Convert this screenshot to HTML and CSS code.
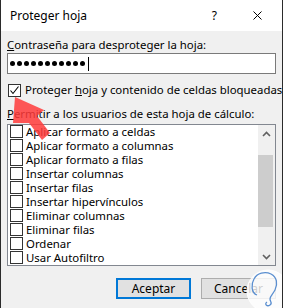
FILE: index.html
```html
<!DOCTYPE html>
<html lang="es">

<head>
    <title>Proteger hoja</title>
    <link rel="stylesheet" href="styles.css">
</head>

<body>
<div class="dialog">
    <div class="titlebar">
        <span class="title">Proteger hoja</span>
        <span class="help">?</span>
        <svg class="close" width="9" height="9" viewBox="0 0 9 9">
            <path d="M0.5 0.5 L8.5 8.5 M8.5 0.5 L0.5 8.5" stroke="#000" stroke-width="1" fill="none"/>
        </svg>
    </div>

    <div class="content">
        <div class="label"><u>C</u>ontraseña para desproteger la hoja:</div>
        <div class="password">
            <span class="dot"></span><span class="dot"></span><span class="dot"></span><span class="dot"></span>
            <span class="dot"></span><span class="dot"></span><span class="dot"></span><span class="dot"></span>
            <span class="dot"></span><span class="dot"></span><span class="dot"></span>
            <span class="caret"></span>
        </div>

        <div class="check-row">
            <span class="box">
                <svg width="11" height="11" viewBox="0 0 11 11">
                    <path d="M1.5 5.5 L4 8.5 L9.5 1.5" stroke="#000" stroke-width="1.1" fill="none"/>
                </svg>
            </span>
            <span>Proteger <u>h</u>oja y contenido de celdas bloqueadas</span>
        </div>

        <div class="label permit"><u>P</u>ermitir a los usuarios de esta hoja de cálculo:</div>

        <div class="listbox">
            <div class="items">
                <div class="item"><span class="box"></span>Aplicar formato a celdas</div>
                <div class="item"><span class="box"></span>Aplicar formato a columnas</div>
                <div class="item"><span class="box"></span>Aplicar formato a filas</div>
                <div class="item"><span class="box"></span>Insertar columnas</div>
                <div class="item"><span class="box"></span>Insertar filas</div>
                <div class="item"><span class="box"></span>Insertar hipervínculos</div>
                <div class="item"><span class="box"></span>Eliminar columnas</div>
                <div class="item"><span class="box"></span>Eliminar filas</div>
                <div class="item"><span class="box"></span>Ordenar</div>
                <div class="item"><span class="box"></span>Usar Autofiltro</div>
            </div>
            <div class="scrollbar">
                <div class="arrow-btn">
                    <svg width="9" height="6" viewBox="0 0 9 6">
                        <path d="M1 5 L4.5 1.5 L8 5" stroke="#606060" stroke-width="1.6" fill="none"/>
                    </svg>
                </div>
                <div class="track">
                    <div class="thumb"></div>
                </div>
                <div class="arrow-btn">
                    <svg width="9" height="6" viewBox="0 0 9 6">
                        <path d="M1 1 L4.5 4.5 L8 1" stroke="#606060" stroke-width="1.6" fill="none"/>
                    </svg>
                </div>
            </div>
        </div>

        <div class="buttons">
            <button class="btn default">Aceptar</button>
            <button class="btn">Cancelar</button>
        </div>
    </div>

    <!-- red arrow marking the checkbox -->
    <svg class="red-arrow" width="60" height="60" viewBox="0 0 60 60">
        <polygon points="14,14 43,27 36,33 49,50 41,57 28,40 12,40" fill="#ff3b3b" fill-opacity="0.85"/>
    </svg>

    <!-- watermark -->
    <svg class="watermark" width="46" height="46" viewBox="0 0 46 46">
        <circle cx="22" cy="22" r="21" fill="#ffffff" fill-opacity="0.8" stroke="#ffffff" stroke-width="1"/>
        <path d="M11 26 C5 24 5 15 8 10 C11 4 19 2 25 5 C31 8 32 15 29 21 C27 25 24 27 24 30 C24 33 27 34 24 36 C21 38 18 35 21 33"
              stroke="#5b8fd0" stroke-width="1.3" fill="none"/>
    </svg>
</div>
</body>

</html>
```

FILE: styles.css
```css
* {
    box-sizing: border-box;
}

body {
    margin: 0;
    font-family: "Noto Sans", sans-serif;
    font-size: 11.4px;
    color: #000;
}

.dialog {
    position: relative;
    width: 283px;
    height: 308px;
    background-color: #f0f0f0;
    border-left: 1px solid #2b2b2b;
    border-right: 1px solid #2b2b2b;
    overflow: hidden;
}

.titlebar {
    height: 31px;
    background-color: #fff;
    display: flex;
    align-items: center;
    padding-left: 9px;
    font-size: 12px;
}

.title {
    flex: 1;
}

.help {
    margin-right: 36px;
}

.close {
    margin-right: 20px;
}

.content {
    padding: 6px 6px 0;
}

.label {
    line-height: 16px;
    white-space: nowrap;
}

.password {
    height: 21px;
    background-color: #fff;
    border: 1px solid #7a7a7a;
    display: flex;
    align-items: center;
    padding-left: 2px;
    gap: 2px;
}

.dot {
    width: 5px;
    height: 5px;
    border-radius: 50%;
    background-color: #000;
}

.caret {
    width: 1px;
    height: 14px;
    background-color: #000;
    margin-left: 1px;
}

.check-row {
    display: flex;
    align-items: center;
    gap: 4px;
    margin-top: 8px;
    line-height: 16px;
    padding-left: 1px;
    white-space: nowrap;
}

.box {
    width: 13px;
    height: 13px;
    flex: none;
    border: 1px solid #333;
    background-color: #fff;
    display: flex;
    align-items: center;
    justify-content: center;
}

.permit {
    margin-top: 8px;
}

.listbox {
    margin-top: 2px;
    height: 142px;
    border: 1px solid #828790;
    background-color: #fff;
    display: flex;
}

.items {
    flex: 1;
    overflow: hidden;
    padding-left: 2px;
}

.item {
    height: 14px;
    display: flex;
    align-items: flex-start;
    gap: 3px;
    line-height: 14px;
    white-space: nowrap;
}

.item .box {
    margin-top: 0;
}

.scrollbar {
    width: 17px;
    background-color: #f0f0f0;
    display: flex;
    flex-direction: column;
}

.arrow-btn {
    height: 17px;
    display: flex;
    align-items: center;
    justify-content: center;
}

.track {
    flex: 1;
    padding-top: 13px;
}

.thumb {
    width: 15px;
    height: 72px;
    background-color: #cdcdcd;
}

.buttons {
    display: flex;
    justify-content: flex-end;
    gap: 10px;
    margin-top: 12px;
}

.btn {
    width: 75px;
    height: 21px;
    font-family: "Noto Sans", sans-serif;
    font-size: 12px;
    line-height: 17px;
    background-color: #e1e1e1;
    border: 1px solid #adadad;
    padding: 0;
}

.btn.default {
    border: 2px solid #0078d7;
}

.red-arrow {
    position: absolute;
    left: 0;
    top: 83px;
}

.watermark {
    position: absolute;
    left: 245px;
    top: 269px;
}
```
